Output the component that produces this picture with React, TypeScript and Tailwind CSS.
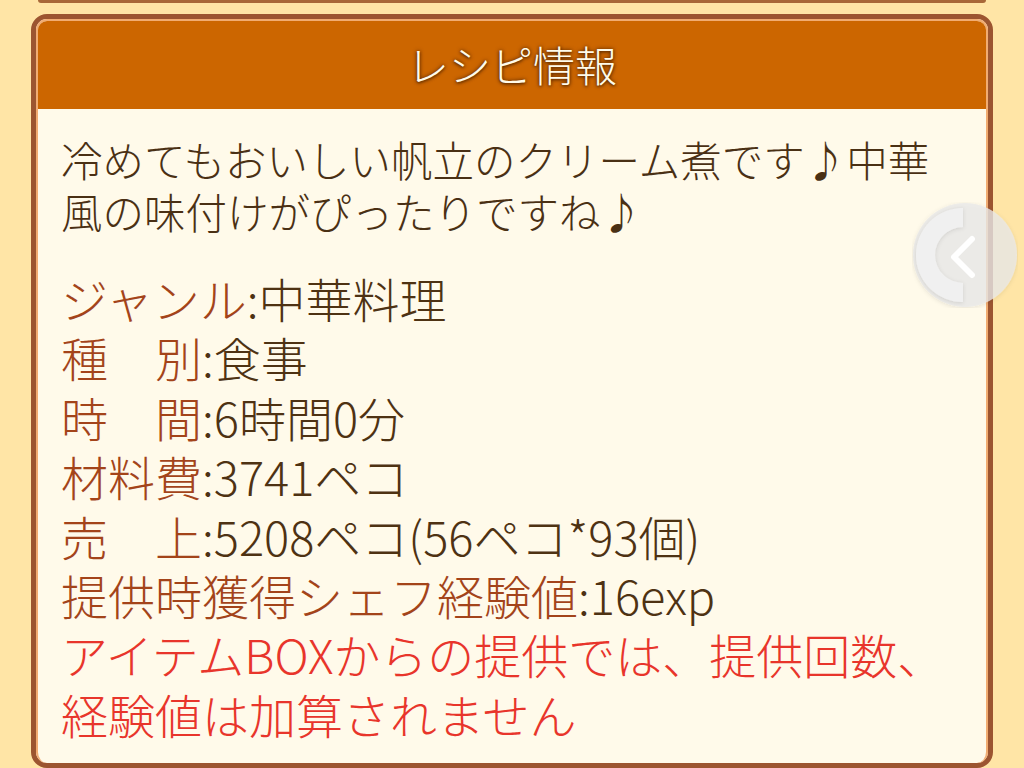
import React from "react";

const font = { fontFamily: '"Noto Sans CJK JP", "Noto Sans", sans-serif' };

interface Row {
  label: string;
  value: string;
}

const rows: Row[] = [
  { label: "ジャンル", value: "中華料理" },
  { label: "種\u3000別", value: "食事" },
  { label: "時\u3000間", value: "6時間0分" },
  { label: "材料費", value: "3741ペコ" },
  { label: "売\u3000上", value: "5208ペコ(56ペコ*93個)" },
  { label: "提供時獲得シェフ経験値", value: "16exp" },
];

const BackButton: React.FC = () => (
  <svg
    className="absolute left-[912px] top-[202px]"
    width="106"
    height="106"
    viewBox="0 0 106 106"
  >
    <defs>
      <filter id="sh" x="-20%" y="-20%" width="140%" height="140%">
        <feDropShadow dx="0" dy="1" stdDeviation="2" floodColor="#000" floodOpacity="0.12" />
      </filter>
    </defs>
    <circle cx="53" cy="53" r="52" fill="#e9e9e9" fillOpacity="0.78" filter="url(#sh)" />
    <path
      d="M51 6 A47 47 0 0 0 51 100 L51 81 A28 28 0 0 1 51 25 Z"
      fill="#f1f1f1"
      fillOpacity="0.95"
      filter="url(#sh)"
    />
    <path
      d="M60 37 L42 55 L60 73"
      fill="none"
      stroke="#ffffff"
      strokeWidth="6"
      strokeLinecap="round"
      strokeLinejoin="round"
    />
  </svg>
);

export default function App() {
  return (
    <div className="relative w-[1024px] h-[768px] overflow-hidden bg-[#ffe5a6] font-light" style={font}>
      <div className="mx-[38px] h-[3px] rounded-b-[6px] border-b-[3px] border-[#a86838]" />
      <div className="mx-[31px] mt-[11px] rounded-[16px] border-[5px] border-[#9c5530] bg-[#fffaea]">
        <div className="rounded-[11px] border-t-2 border-x-2 border-[#f1ac72] overflow-hidden">
          <div className="h-[88px] bg-[#cc6600] flex items-center justify-center">
            <span
              className="text-[42px] leading-none text-[#fffbea] pb-[2px]"
              style={{ textShadow: "0 0 4px #5a2a00, 0 1px 3px #5a2a00" }}
            >
              レシピ情報
            </span>
          </div>
          <div className="pl-[23px] pr-[16px] pt-[24px] pb-[20px]">
            <p className="text-[41.5px] leading-[52px] text-[#4a3014] whitespace-nowrap">
              冷めてもおいしい帆立のクリーム煮です♪中華
              <br />
              風の味付けがぴったりですね♪
            </p>
            <div className="mt-[31px] text-[47px] leading-[59.4px]">
              {rows.map((r) => (
                <div key={r.label} className="whitespace-nowrap">
                  <span className="text-[#a3441a]">{r.label}</span>
                  <span className="text-[#4e3213]">:{r.value}</span>
                </div>
              ))}
              <div className="text-[#e8352b] whitespace-nowrap">
                アイテムBOXからの提供では、提供回数、
                <br />
                経験値は加算されません
              </div>
            </div>
          </div>
        </div>
      </div>
      <BackButton />
    </div>
  );
}
